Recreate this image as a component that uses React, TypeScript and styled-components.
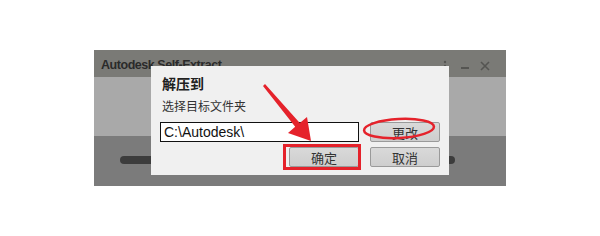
import React from 'react';
import styled, { createGlobalStyle } from 'styled-components';

const GlobalStyle = createGlobalStyle`
    html, body {
        margin: 0;
        padding: 0;
        background: #ffffff;
    }
`;

const Page = styled.div`
    position: relative;
    width: 600px;
    height: 236px;
    box-sizing: border-box;
    padding: 50px 0 0 94px;
    background: #ffffff;
    font-family: 'Noto Sans CJK SC', 'Liberation Sans', sans-serif;
`;

const Window = styled.div`
    position: relative;
    width: 412px;
    height: 136px;
    display: flex;
    flex-direction: column;
    background: #7b7b7b;
`;

const TitleBar = styled.div`
    height: 27px;
    display: flex;
    align-items: center;
    justify-content: space-between;
    padding: 0 16px 0 7px;
    background: #7a7a76;
    color: #2a2a2a;
`;

const Title = styled.span`
    font-family: 'Liberation Sans', Arial, sans-serif;
    font-size: 12.5px;
    font-weight: 700;
    letter-spacing: -0.45px;
    margin-top: 3px;
`;

const Controls = styled.div`
    display: flex;
    align-items: center;
    gap: 10px;
    color: #555552;
    margin-top: 4px;

    > svg:first-child {
        margin-right: 3px;
    }
`;

const LightBand = styled.div`
    height: 59px;
    background: #a9a9a9;
`;

const DarkBand = styled.div`
    flex: 1;
    display: flex;
    align-items: center;
    padding: 0 51px 2px 26px;
`;

const Progress = styled.div`
    flex: 1;
    height: 8px;
    border-radius: 4px;
    background: #3c3c3c;
`;

const Dialog = styled.div`
    position: absolute;
    left: 57px;
    top: 16px;
    width: 298px;
    height: 109px;
    box-sizing: border-box;
    padding: 8px 9px 0;
    background: #f0f0f0;
    display: flex;
    flex-direction: column;
`;

const Heading = styled.div`
    font-size: 14px;
    line-height: 18px;
    font-weight: 700;
    color: #202020;
    padding-left: 2px;
`;

const Subtitle = styled.div`
    margin-top: 6px;
    font-size: 12px;
    line-height: 16px;
    color: #333333;
    padding-left: 2px;
`;

const Row = styled.div<{ $top: number; $end?: boolean }>`
    display: flex;
    gap: 11px;
    margin-top: ${(p) => p.$top}px;
    justify-content: ${(p) => (p.$end ? 'flex-end' : 'flex-start')};
`;

const PathInput = styled.div`
    width: 199px;
    height: 20px;
    box-sizing: border-box;
    border: 1px solid #111111;
    background: #ffffff;
    padding-left: 3px;
    font-family: 'Liberation Sans', Arial, sans-serif;
    font-size: 14px;
    line-height: 18px;
    color: #111111;
`;

const Button = styled.div`
    width: 70px;
    height: 20px;
    box-sizing: border-box;
    border: 1px solid #9a9a9a;
    border-radius: 2px;
    background: linear-gradient(#d9d9d9, #cecece);
    display: flex;
    align-items: center;
    justify-content: center;
    font-size: 13px;
    color: #333333;
`;

const Marks = styled.svg`
    position: absolute;
    left: 0;
    top: 0;
    pointer-events: none;
`;

const RED = '#e5222b';

const App = (): JSX.Element => (
    <>
        <GlobalStyle />
        <Page>
            <Window>
                <TitleBar>
                    <Title>Autodesk Self-Extract</Title>
                    <Controls>
                        <svg width="4" height="12" viewBox="0 0 4 12">
                            <circle cx="2" cy="2" r="1.2" fill="currentColor" />
                            <circle cx="2" cy="6" r="1.2" fill="currentColor" />
                        </svg>
                        <svg width="10" height="10" viewBox="0 0 10 10">
                            <path d="M1 7h8" stroke="currentColor" strokeWidth="2" />
                        </svg>
                        <svg width="10" height="10" viewBox="0 0 10 10">
                            <path d="M1 1l8 8M9 1l-8 8" stroke="currentColor" strokeWidth="1.6" />
                        </svg>
                    </Controls>
                </TitleBar>
                <LightBand />
                <DarkBand>
                    <Progress />
                </DarkBand>

                <Dialog>
                    <Heading>解压到</Heading>
                    <Subtitle>选择目标文件夹</Subtitle>
                    <Row $top={8}>
                        <PathInput>C:\Autodesk\</PathInput>
                        <Button>更改</Button>
                    </Row>
                    <Row $top={5} $end>
                        <Button>确定</Button>
                        <Button>取消</Button>
                    </Row>
                </Dialog>
            </Window>

            {/* red annotation marks */}
            <Marks width="600" height="236" viewBox="0 0 600 236">
                <polygon
                    points="265,84 299.8,123 307,117 311,141 288,133 295.2,126.8 263,86"
                    fill={RED}
                />
                <ellipse
                    cx="399"
                    cy="128.5"
                    rx="35"
                    ry="9.5"
                    fill="none"
                    stroke={RED}
                    strokeWidth="2.5"
                    transform="rotate(-3 399 128.5)"
                />
                <rect x="284.5" y="145.5" width="75" height="23" fill="none" stroke={RED} strokeWidth="3" />
            </Marks>
        </Page>
    </>
);

export default App;
